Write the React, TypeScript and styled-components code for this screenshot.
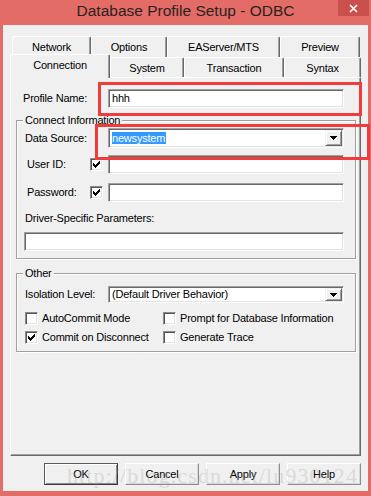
import React from "react";
import styled, { createGlobalStyle } from "styled-components";

const FRAME = "#e46c66";
const FACE = "#f0f0f0";
const UI_FONT = `"Liberation Sans", Arial, sans-serif`;

const GlobalStyle = createGlobalStyle`
  html, body { margin: 0; padding: 0; background: ${FRAME}; }
  body { font-family: ${UI_FONT}; }
  * { box-sizing: border-box; }
`;

const Window = styled.div`
  position: relative;
  width: 371px;
  height: 496px;
  background: ${FRAME};
  display: flex;
  flex-direction: column;
  padding: 0 3px 5px 3px;
  overflow: hidden;
`;

const TitleBar = styled.div`
  height: 25px;
  flex: none;
  padding-top: 1px;
  display: flex;
  justify-content: center;
  font-family: ${UI_FONT};
  font-size: 15.5px;
  line-height: 20px;
  color: #2a2222;
  white-space: nowrap;
`;

const CloseButton = styled.div`
  position: absolute;
  top: 0;
  right: 2px;
  width: 31px;
  height: 16px;
  background: #c9504b;
  display: flex;
  align-items: center;
  justify-content: center;
`;

const Client = styled.div`
  flex: 1;
  background: ${FACE};
  display: flex;
  flex-direction: column;
  padding: 11px 7px 6px 7px;
  font-family: ${UI_FONT};
  font-size: 11px;
  letter-spacing: -0.2px;
  color: #000;
`;

const TabRow = styled.div<{ $front?: boolean }>`
  display: flex;
  align-items: flex-end;
  height: ${(p) => (p.$front ? 20 : 21)}px;
  padding-left: ${(p) => (p.$front ? 0 : 2)}px;
  position: relative;
  z-index: ${(p) => (p.$front ? 2 : 1)};
`;

const Tab = styled.div<{ $w: number; $selected?: boolean; $back?: boolean }>`
  width: ${(p) => p.$w}px;
  height: ${(p) => (p.$selected ? 24 : p.$back ? 21 : 20)}px;
  margin-bottom: ${(p) => (p.$selected ? -1 : 0)}px;
  background: ${FACE};
  border-top: 1px solid #fff;
  border-left: 1px solid #fff;
  border-right: 1px solid #696969;
  box-shadow: inset -1px 0 0 #a0a0a0;
  border-radius: 2px 2px 0 0;
  display: flex;
  align-items: center;
  justify-content: center;
  padding-bottom: ${(p) => (p.$selected ? 4 : 0)}px;
  white-space: nowrap;
`;

const Panel = styled.div`
  flex: 1;
  position: relative;
  z-index: 1;
  border-top: 1px solid #fff;
  border-left: 1px solid #fff;
  border-right: 1px solid #696969;
  border-bottom: 1px solid #696969;
  box-shadow: inset -1px -1px 0 #a0a0a0;
  padding: 0 4px 0 5px;
  display: flex;
  flex-direction: column;
`;

const Row = styled.div<{ $h: number; $mt?: number; $indent?: number }>`
  display: flex;
  align-items: center;
  height: ${(p) => p.$h}px;
  margin-top: ${(p) => p.$mt ?? 0}px;
  padding-left: ${(p) => p.$indent ?? 0}px;
`;

const Label = styled.div<{ $w?: number; $indent?: number }>`
  width: ${(p) => (p.$w ? `${p.$w}px` : "auto")};
  padding-left: ${(p) => p.$indent ?? 0}px;
  line-height: 13px;
  white-space: nowrap;
  flex: none;
`;

const Field = styled.div<{ $w: number; $h?: number; $ml?: number }>`
  width: ${(p) => p.$w}px;
  height: ${(p) => p.$h ?? 19}px;
  margin-left: ${(p) => p.$ml ?? 0}px;
  flex: none;
  background: #fff;
  border-top: 1px solid #a0a0a0;
  border-left: 1px solid #a0a0a0;
  border-bottom: 1px solid #fff;
  border-right: 1px solid #fff;
  box-shadow: inset 1px 1px 0 #696969, inset -1px -1px 0 #e3e3e3;
  display: flex;
  align-items: center;
  padding: 0 1px 0 2px;
  white-space: nowrap;
`;

const FieldText = styled.span`
  flex: 1;
  padding-left: 1px;
  line-height: 13px;
`;

const Highlight = styled.span`
  background: #3399ff;
  color: #fff;
  line-height: 13px;
  padding: 0 1px 0 0;
`;

const DropButton = styled.div<{ $h?: number }>`
  width: 17px;
  height: ${(p) => p.$h ?? 16}px;
  flex: none;
  margin-left: auto;
  background: ${FACE};
  border-top: 1px solid #f0f0f0;
  border-left: 1px solid #f0f0f0;
  border-right: 1px solid #696969;
  border-bottom: 1px solid #696969;
  box-shadow: inset 1px 1px 0 #fff, inset -1px -1px 0 #a0a0a0;
  display: flex;
  align-items: center;
  justify-content: center;
`;

const Group = styled.div<{ $mt: number; $pt: number }>`
  position: relative;
  margin-top: ${(p) => p.$mt}px;
  border: 1px solid #a0a0a0;
  box-shadow: inset 1px 1px 0 #fff, 1px 1px 0 #fff;
  padding: ${(p) => p.$pt}px 0 7px 8px;
  display: flex;
  flex-direction: column;
`;

const Caption = styled.span`
  position: absolute;
  top: -7px;
  left: 6px;
  padding: 0 2px;
  background: ${FACE};
  line-height: 13px;
`;

const CheckBox = styled.span`
  width: 13px;
  height: 13px;
  flex: none;
  background: #fff;
  border-top: 1px solid #8a8a8a;
  border-left: 1px solid #8a8a8a;
  border-right: 1px solid #fff;
  border-bottom: 1px solid #fff;
  box-shadow: inset 1px 1px 0 #555, inset -1px -1px 0 #e3e3e3;
  display: flex;
  align-items: center;
  justify-content: center;
`;

const CheckGrid = styled.div`
  display: grid;
  grid-template-columns: 138px auto;
  grid-auto-rows: 13px;
  row-gap: 6px;
  margin-top: 9px;
`;

const CheckItem = styled.div`
  display: flex;
  align-items: center;
  gap: 4px;
  line-height: 13px;
  white-space: nowrap;
`;

const ButtonRow = styled.div`
  display: flex;
  justify-content: flex-end;
  gap: 7px;
  margin-top: 7px;
  flex: none;
`;

const Button = styled.div<{ $default?: boolean }>`
  width: 74px;
  height: 22px;
  background: ${FACE};
  display: flex;
  align-items: center;
  justify-content: center;
  border-top: 1px solid ${(p) => (p.$default ? "#5a5a5a" : "#fff")};
  border-left: 1px solid ${(p) => (p.$default ? "#5a5a5a" : "#fff")};
  border-right: 1px solid ${(p) => (p.$default ? "#3c3c3c" : "#8c8c8c")};
  border-bottom: 1px solid ${(p) => (p.$default ? "#3c3c3c" : "#8c8c8c")};
  box-shadow: ${(p) =>
    p.$default
      ? "inset 1px 1px 0 #fff, inset -1px -1px 0 #8c8c8c"
      : "inset -1px -1px 0 #d8d8d8"};
`;

const Watermark = styled.div`
  position: absolute;
  left: 67px;
  top: 465px;
  font-family: "Liberation Serif", "Times New Roman", serif;
  font-size: 22px;
  line-height: 22px;
  letter-spacing: 1.1px;
  color: rgba(160, 160, 160, 0.3);
  white-space: nowrap;
  pointer-events: none;
`;

const Annotation = styled.div<{ $x: number; $y: number; $w: number; $h: number }>`
  position: absolute;
  left: ${(p) => p.$x}px;
  top: ${(p) => p.$y}px;
  width: ${(p) => p.$w}px;
  height: ${(p) => p.$h}px;
  border: 3px solid #f03c3c;
  pointer-events: none;
  z-index: 5;
`;

const Check = () => (
  <svg width="7" height="7" viewBox="0 0 7 7" shapeRendering="crispEdges">
    <path
      d="M6 0h1v3h-1v1h-1v1h-1v1h-1v1h-1v-1h-1v-1h-1v-3h1v1h1v1h1v-1h1v-1h1z"
      fill="#000"
    />
  </svg>
);

const Arrow = () => (
  <svg width="7" height="4" viewBox="0 0 7 4" shapeRendering="crispEdges">
    <path d="M0 0h7v1h-1v1h-1v1h-1v1h-1v-1h-1v-1h-1v-1h-1z" fill="#000" />
  </svg>
);

const CloseGlyph = () => (
  <svg width="9" height="9" viewBox="0 0 9 9">
    <path d="M1 1L8 8M8 1L1 8" stroke="#fff" strokeWidth="1.6" />
  </svg>
);

const Combo: React.FC<{ w: number; h: number; children: React.ReactNode }> = ({ w, h, children }) => (
  <Field $w={w} $h={h}>
    <FieldText>{children}</FieldText>
    <DropButton $h={h - 4}>
      <Arrow />
    </DropButton>
  </Field>
);

export default function App() {
  return (
    <>
      <GlobalStyle />
      <Window>
        <TitleBar>Database Profile Setup - ODBC</TitleBar>
        <CloseButton>
          <CloseGlyph />
        </CloseButton>
        <Client>
          <TabRow>
            <Tab $back $w={79}>Network</Tab>
            <Tab $back $w={76}>Options</Tab>
            <Tab $back $w={113}>EAServer/MTS</Tab>
            <Tab $back $w={80}>Preview</Tab>
          </TabRow>
          <TabRow $front>
            <Tab $selected $w={100}>Connection</Tab>
            <Tab $w={74}>System</Tab>
            <Tab $w={100}>Transaction</Tab>
            <Tab $w={77}>Syntax</Tab>
          </TabRow>
          <Panel>
            <Row $h={19} $mt={11} $indent={7}>
              <Label $w={85}>Profile Name:</Label>
              <Field $w={236}>
                <FieldText>hhh</FieldText>
              </Field>
            </Row>

            <Group $mt={12} $pt={7}>
              <Caption>Connect Information</Caption>
              <Row $h={20}>
                <Label $w={83}>Data Source:</Label>
                <Combo w={236} h={20}>
                  <Highlight>newsystem</Highlight>
                </Combo>
              </Row>
              <Row $h={19} $mt={7}>
                <Label $w={65} $indent={2}>User ID:</Label>
                <CheckBox>
                  <Check />
                </CheckBox>
                <Field $w={236} $ml={5} />
              </Row>
              <Row $h={19} $mt={9}>
                <Label $w={65} $indent={2}>Password:</Label>
                <CheckBox>
                  <Check />
                </CheckBox>
                <Field $w={236} $ml={5} />
              </Row>
              <Row $h={13} $mt={10}>
                <Label>Driver-Specific Parameters:</Label>
              </Row>
              <Row $h={19} $mt={7}>
                <Field $w={320} $ml={-1} />
              </Row>
            </Group>

            <Group $mt={14} $pt={12}>
              <Caption>Other</Caption>
              <Row $h={17}>
                <Label $w={83}>Isolation Level:</Label>
                <Combo w={236} h={17}>(Default Driver Behavior)</Combo>
              </Row>
              <CheckGrid>
                <CheckItem>
                  <CheckBox />
                  AutoCommit Mode
                </CheckItem>
                <CheckItem>
                  <CheckBox />
                  Prompt for Database Information
                </CheckItem>
                <CheckItem>
                  <CheckBox>
                    <Check />
                  </CheckBox>
                  Commit on Disconnect
                </CheckItem>
                <CheckItem>
                  <CheckBox />
                  Generate Trace
                </CheckItem>
              </CheckGrid>
            </Group>
          </Panel>
          <ButtonRow>
            <Button $default>OK</Button>
            <Button>Cancel</Button>
            <Button>Apply</Button>
            <Button>Help</Button>
          </ButtonRow>
        </Client>
        <Watermark>http://blog.csdn.net/lu930124</Watermark>
        <Annotation $x={98} $y={82} $w={264} $h={34} />
        <Annotation $x={95} $y={124} $w={275} $h={36} />
      </Window>
    </>
  );
}
